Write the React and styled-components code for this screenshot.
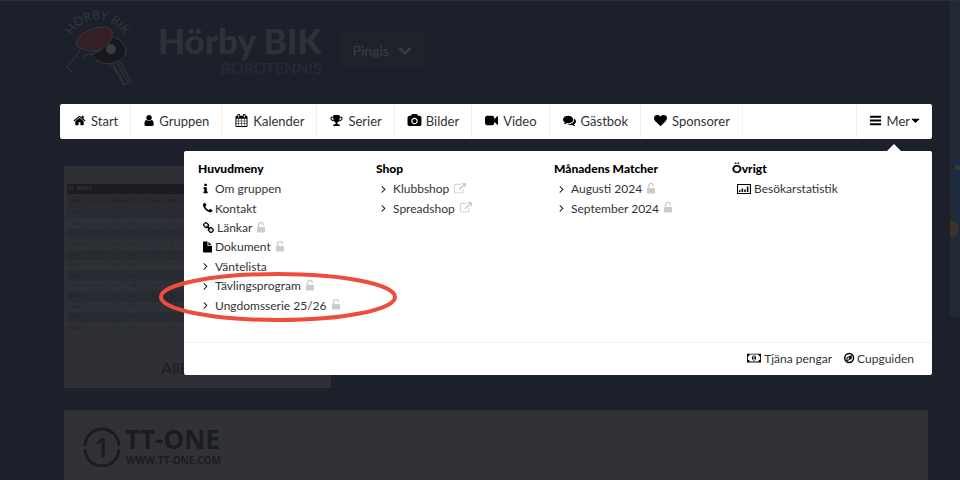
import React from "react";
import styled, { createGlobalStyle } from "styled-components";

const GlobalStyle = createGlobalStyle`
  * {
    box-sizing: border-box;
  }

  body {
    margin: 0;
    background: #1c202b;
    color: #333333;
    font-family: Lato, "Liberation Sans", sans-serif;
    font-size: 13px;
  }

  ul, h1, h2, p {
    margin: 0;
    padding: 0;
    list-style: none;
  }

  a, button {
    color: inherit;
    font: inherit;
    text-decoration: none;
  }
`;

const ICONS = {
  home: "M1472 992v480q0 26-19 45t-45 19h-384v-384h-256v384h-384q-26 0-45-19t-19-45v-480q0-1 .5-3t.5-3l575-474 575 474q1 2 1 6zm223-69l-62 74q-8 9-21 11h-3q-13 0-21-7l-692-577-692 577q-12 8-24 7-13-2-21-11l-62-74q-8-10-7-23.5t11-21.5l719-599q32-26 76-26t76 26l244 204v-195q0-14 9-23t23-9h192q14 0 23 9t9 23v408l219 182q10 8 11 21.5t-7 23.5z",
  user: "M1536 1399q0 109-62.5 187t-150.5 78h-854q-88 0-150.5-78t-62.5-187q0-85 8.5-160.5t31.5-152 58.5-131 94-89 134.5-34.5q131 128 313 128t313-128q76 0 134.5 34.5t94 89 58.5 131 31.5 152 8.5 160.5zm-256-887q0 159-112.5 271.5t-271.5 112.5-271.5-112.5-112.5-271.5 112.5-271.5 271.5-112.5 271.5 112.5 112.5 271.5z",
  calendar: "M192 1664h288v-288h-288v288zm352 0h320v-288h-320v288zm-352-352h288v-320h-288v320zm352 0h320v-320h-320v320zm-352-384h288v-288h-288v288zm736 736h320v-288h-320v288zm-384-736h320v-288h-320v288zm768 736h288v-288h-288v288zm-384-352h320v-320h-320v320zm-352-864v-288q0-13-9.5-22.5t-22.5-9.5h-64q-13 0-22.5 9.5t-9.5 22.5v288q0 13 9.5 22.5t22.5 9.5h64q13 0 22.5-9.5t9.5-22.5zm736 864h288v-320h-288v320zm-384-384h320v-288h-320v288zm384 0h288v-288h-288v288zm32-480v-288q0-13-9.5-22.5t-22.5-9.5h-64q-13 0-22.5 9.5t-9.5 22.5v288q0 13 9.5 22.5t22.5 9.5h64q13 0 22.5-9.5t9.5-22.5zm384-64v1280q0 52-38 90t-90 38h-1408q-52 0-90-38t-38-90v-1280q0-52 38-90t90-38h128v-96q0-66 47-113t113-47h64q66 0 113 47t47 113v96h384v-96q0-66 47-113t113-47h64q66 0 113 47t47 113v96h128q52 0 90 38t38 90z",
  trophy: "M522 883q-74-162-74-371h-256v96q0 78 94.5 162t235.5 113zm1078-275v-96h-256q0 209-74 371 141-29 235.5-113t94.5-162zm128-128v128q0 71-41.5 143t-112 130-173 97.5-215.5 44.5q-42 54-95 95-38 34-52.5 72.5t-14.5 89.5q0 54 30.5 91t97.5 37q75 0 133.5 45.5t58.5 114.5v64q0 14-9 23t-23 9h-832q-14 0-23-9t-9-23v-64q0-69 58.5-114.5t133.5-45.5q67 0 97.5-37t30.5-91q0-51-14.5-89.5t-52.5-72.5q-53-41-95-95-113-5-215.5-44.5t-173-97.5-112-130-41.5-143v-128q0-40 28-68t68-28h288v-96q0-66 47-113t113-47h576q66 0 113 47t47 113v96h288q40 0 68 28t28 68z",
  camera: "M896 672q119 0 203.5 84.5t84.5 203.5-84.5 203.5-203.5 84.5-203.5-84.5-84.5-203.5 84.5-203.5 203.5-84.5zm704-416q106 0 181 75t75 181v896q0 106-75 181t-181 75h-1408q-106 0-181-75t-75-181v-896q0-106 75-181t181-75h224l51-136q19-49 69.5-84.5t103.5-35.5h512q53 0 103.5 35.5t69.5 84.5l51 136h224zm-704 1152q185 0 316.5-131.5t131.5-316.5-131.5-316.5-316.5-131.5-316.5 131.5-131.5 316.5 131.5 316.5 316.5 131.5z",
  video: "M1792 352v1088q0 42-39 59-13 5-25 5-27 0-45-19l-403-403v166q0 119-84.5 203.5t-203.5 84.5h-704q-119 0-203.5-84.5t-84.5-203.5v-704q0-119 84.5-203.5t203.5-84.5h704q119 0 203.5 84.5t84.5 203.5v165l403-402q18-19 45-19 12 0 25 5 39 17 39 59z",
  comments: "M1408 768q0 139-94 257t-256.5 186.5-353.5 68.5q-86 0-176-16-124 88-278 128-36 9-86 16h-3q-11 0-20.5-8t-11.5-21q-1-3-1-6.5t.5-6.5 2-6l2.5-5 3.5-5.5 4-5 4.5-5 4-4.5q5-6 23-25t26-29.5 22.5-29 25-38.5 20.5-44q-124-72-195-177t-71-224q0-139 94-257t256.5-186.5 353.5-68.5 353.5 68.5 256.5 186.5 94 257zm384 256q0 120-71 224.5t-195 176.5q10 24 20.5 44t25 38.5 22.5 29 26 29.5 23 25q1 1 4 4.5t4.5 5 4 5 3.5 5.5l2.5 5 2 6 .5 6.5-1 6.5q-3 14-13 22t-22 7q-50-7-86-16-154-40-278-128-90 16-176 16-271 0-472-132 58 4 88 4 161 0 309-45t264-129q125-92 192-212t67-254q0-77-23-152 129 71 204 178t75 230z",
  heart: "M896 1664q-26 0-44-18l-624-602q-10-8-27.5-26t-55.5-65.5-68-97.5-53.5-121-23.5-138q0-220 127-344t351-124q62 0 126.5 21.5t120 58 95.5 68.5 76 68q36-36 76-68t95.5-68.5 120-58 126.5-21.5q224 0 351 124t127 344q0 221-229 450l-623 600q-18 18-44 18z",
  bars: "M128 256h1536v256h-1536zM128 768h1536v256h-1536zM128 1280h1536v256h-1536z",
  caret: "M1408 704q0 26-19 45l-448 448q-19 19-45 19t-45-19l-448-448q-19-19-19-45t19-45 45-19h896q26 0 45 19t19 45z",
  info: "M1216 1344v128q0 26-19 45t-45 19h-512q-26 0-45-19t-19-45v-128q0-26 19-45t45-19h64v-384h-64q-26 0-45-19t-19-45v-128q0-26 19-45t45-19h384q26 0 45 19t19 45v576h64q26 0 45 19t19 45zm-128-1152v192q0 26-19 45t-45 19h-256q-26 0-45-19t-19-45v-192q0-26 19-45t45-19h256q26 0 45 19t19 45z",
  phone: "M1600 1240q0 27-10 70.5t-21 68.5q-21 50-122 106-94 51-186 51-27 0-53-3.5t-57.5-12.5-47-14.5-55.5-20.5-49-18q-98-35-175-83-127-79-264-216t-216-264q-48-77-83-175-3-9-18-49t-20.5-55.5-14.5-47-12.5-57.5-3.5-53q0-92 51-186 56-101 106-122 25-11 68.5-21t70.5-10q14 0 21 3 18 6 53 76 11 19 30 54t35 63.5 31 53.5q3 4 17.5 25t21.5 35.5 7 28.5q0 20-28.5 50t-62 55-62 53-28.5 46q0 9 5 22.5t8.5 20.5 14 24 11.5 19q76 137 174 235t235 174q2 1 19 11.5t24 14 20.5 8.5 22.5 5q18 0 46-28.5t53-62 55-62 50-28.5q14 0 28.5 7t35.5 21.5 25 17.5q25 15 53.5 31t63.5 35 54 30q70 35 76 53 3 7 3 21z",
  link: "M1520 1216q0-40-28-68l-208-208q-28-28-68-28-42 0-72 32 3 3 19 18.5t21.5 21.5 15 19 13 25.5 3.5 27.5q0 40-28 68t-68 28q-15 0-27.5-3.5t-25.5-13-19-15-21.5-21.5-18.5-19q-33 31-33 73 0 40 28 68l206 207q27 27 68 27 40 0 68-26l147-146q28-28 28-67zm-703-705q0-40-28-68l-206-207q-28-28-68-28-39 0-68 27l-147 146q-28 28-28 67 0 40 28 68l208 208q27 27 68 27 42 0 72-31-3-3-19-18.5t-21.5-21.5-15-19-13-25.5-3.5-27.5q0-40 28-68t68-28q15 0 27.5 3.5t25.5 13 19 15 21.5 21.5 18.5 19q33-31 33-73zm895 705q0 120-85 203l-147 146q-83 83-203 83-121 0-204-85l-206-207q-83-83-83-203 0-123 88-209l-88-88q-86 88-208 88-120 0-204-84l-208-208q-84-84-84-204t85-203l147-146q83-83 203-83 121 0 204 85l206 207q83 83 83 203 0 123-88 209l88 88q86-88 208-88 120 0 204 84l208 208q84 84 84 204z",
  file: "M1024 640v-472q22 14 36 28l408 408q14 14 28 36h-472zM896 128v544q0 40 28 68t68 28h544v800q0 40-28 68t-68 28h-1088q-40 0-68-28t-28-68v-1344q0-40 28-68t68-28z",
  angle: "M1171 960q0 13-10 23l-466 466q-10 10-23 10t-23-10l-50-50q-10-10-10-23t10-23l393-393-393-393q-10-10-10-23t10-23l50-50q10-10 23-10t23 10l466 466q10 10 10 23z",
  unlock: "M1376 768q40 0 68 28t28 68v576q0 40-28 68t-68 28h-960q-40 0-68-28t-28-68v-576q0-40 28-68t68-28h32v-320q0-185 131.5-316.5t316.5-131.5 316.5 131.5 131.5 316.5q0 26-19 45t-45 19h-64q-26 0-45-19t-19-45q0-106-75-181t-181-75-181 75-75 181v320h736z",
  external: "M1408 928v320q0 119-84.5 203.5t-203.5 84.5h-832q-119 0-203.5-84.5t-84.5-203.5v-832q0-119 84.5-203.5t203.5-84.5h704q14 0 23 9t9 23v64q0 14-9 23t-23 9h-704q-66 0-113 47t-47 113v832q0 66 47 113t113 47h832q66 0 113-47t47-113v-320q0-14 9-23t23-9h64q14 0 23 9t9 23zm384-864v512q0 26-19 45t-45 19-45-19l-176-176-652 652q-10 10-23 10t-23-10l-114-114q-10-10-10-23t10-23l652-652-176-176q-19-19-19-45t19-45 45-19h512q26 0 45 19t19 45z",
  chart: "M-128 160h2048v1472h-2048zM32 320v1152h1728v-1152zM160 1088h224v256h-224zM544 832h224v512h-224zM928 960h224v384h-224zM1312 512h224v832h-224z",
  money: "M-128 256h2048v1280h-2048zM256 384q0 106-75 181t-181 75v512q106 0 181 75t75 181h1280q0-106 75-181t181-75v-512q-106 0-181-75t-75-181zM896 512q160 0 230 120t70 264-70 264-230 120-230-120-70-264 70-264 230-120zM832 640l-128 112 64 76 64-40v236h-96v112h320v-112h-96v-384z",
  compass: "M896 128a768 768 0 1 1 0 1536a768 768 0 1 1 0-1536zM896 352a544 544 0 1 0 0 1088a544 544 0 1 0 0-1088zM1280 448v576l-768 384v-576zM896 768l-240 150v270l240-150z",
  chevron: "M1683 808l-742 741q-19 19-45 19t-45-19l-742-741q-19-19-19-45.5t19-45.5l166-165q19-19 45-19t45 19l531 531 531-531q19-19 45-19t45 19l166 165q19 19 19 45.5t-19 45.5z"
};

// left edge and advance of the glyphs that do not fill the 1792 grid
const GLYPHS = {
  user: [200, 1408],
  info: [512, 640],
  phone: [192, 1408],
  link: [80, 1664],
  file: [256, 1280],
  angle: [512, 640],
  unlock: [320, 1152],
  chart: [-128, 2048],
  money: [-128, 2048],
  compass: [128, 1536]
};

const Svg = styled.svg`
  display: block;
  flex: none;
  overflow: visible;
  width: ${props => props.$width}px;
  height: ${props => props.$height}px;
  fill: ${props => props.$color};
`;

const Icon = ({ name, size = 13, color = "#000000" }) => {
  const [left, advance] = GLYPHS[name] || [0, 1792];
  return (
    <Svg
      viewBox={`${left} 0 ${advance} 1792`}
      preserveAspectRatio="xMinYMid slice"
      $width={Math.round((size * advance) / 1792)}
      $height={size}
      $color={color}
      aria-hidden="true"
    >
      <path fillRule="evenodd" d={ICONS[name]} />
    </Svg>
  );
};

const Page = styled.div`
  position: relative;
  height: 100vh;
  overflow: hidden;
  padding: 0 28px 0 60px;
  border-top: 1px solid #2b2f39;
`;

const Header = styled.header`
  display: flex;
  height: 103px;
  padding-left: 4px;
`;

const Logo = styled.svg`
  width: 72px;
  height: 90px;
  margin-top: 4px;
  overflow: visible;
`;

const TitleBlock = styled.div`
  margin-left: 22px;
  padding-top: 19px;
  text-align: right;
`;

const ClubName = styled.h1`
  color: #303137;
  font-size: 35px;
  line-height: 40px;
  font-weight: 900;
`;

const ClubSport = styled.p`
  color: #2a2c34;
  font-size: 16px;
  line-height: 16px;
`;

const TeamButton = styled.button`
  display: flex;
  align-items: center;
  gap: 9px;
  height: 38px;
  margin: 30px 0 0 17px;
  padding: 0 14px;
  border: 0;
  border-radius: 3px;
  background: #1f222b;
  color: #3a3c43;
  font-size: 14px;
`;

const Nav = styled.nav`
  position: relative;
  display: flex;
  height: 35px;
  border-radius: 2px;
  background: #ffffff;
`;

const NavLink = styled.a`
  display: flex;
  align-items: center;
  gap: 5px;
  padding: 0 12px 2px 13px;
  margin: 1px 0;
  border-right: 1px solid #f0f0f0;
`;

const MoreButton = styled.button`
  display: flex;
  align-items: center;
  gap: 5px;
  margin: 1px 0 1px auto;
  padding: 0 10px 2px 12px;
  border: 0;
  border-left: 1px solid #f0f0f0;
  background: none;

  svg:last-child {
    margin: 0 0 0 -6px;
  }
`;

const MegaMenu = styled.div`
  position: absolute;
  top: 47px;
  left: 124px;
  right: 0;
  z-index: 2;
  border-radius: 2px;
  background: #ffffff;
  font-size: 12px;

  &::before {
    content: "";
    position: absolute;
    top: -7px;
    right: 31px;
    border: 7px solid transparent;
    border-top: 0;
    border-bottom-color: #ffffff;
  }
`;

const MenuColumns = styled.div`
  display: grid;
  grid-template-columns: repeat(4, 1fr);
  padding: 8px 22px 27px 14px;
  border-bottom: 1px solid #f0f0f0;
`;

const MenuTitle = styled.h2`
  color: #000000;
  font-size: 12px;
  line-height: 20px;
  font-weight: 900;
`;

const MenuList = styled.ul`
  display: grid;
  grid-template-rows: repeat(7, 1fr);
  height: 136px;
  padding-left: 5px;
`;

const MenuItem = styled.li`
  display: flex;
  align-items: center;
  gap: 5px;
`;

const MenuLink = styled.a`
  display: flex;
  align-items: center;
  gap: 3px;
`;

const IconSlot = styled.span`
  min-width: 9px;
`;

const MenuFooter = styled.div`
  display: flex;
  justify-content: flex-end;
  gap: 12px;
  height: 32px;
  padding: 0 18px 2px 0;
`;

const Content = styled.main`
  padding: 27px 4px 0;
`;

const AdCard = styled.section`
  width: 267px;
  height: 222px;
  padding: 18px 3px 0;
  background: #2f3035;
  color: #1b1c21;
  text-align: center;
`;

const AdTable = styled.table`
  width: 100%;
  height: 139px;
  table-layout: fixed;
  border-collapse: collapse;
  color: #202127;
  font-family: "Liberation Serif", serif;
  font-size: 4px;
  line-height: 10px;

  caption {
    background: #1b1c21;
    color: #3b3c41;
    font-family: "Liberation Mono", monospace;
    font-size: 5px;
    line-height: 10px;
    text-align: left;
    padding-left: 1px;
  }

  th, td {
    padding: 0;
    height: 10px;
  }

  th {
    height: 14px;
    background: #2a2b30;
  }

  tbody tr:nth-child(odd) {
    background: #282b32;
  }
`;

const AdName = styled.p`
  margin-top: 25px;
  font-size: 16px;
  line-height: 20px;
`;

const SponsorCard = styled.section`
  display: flex;
  gap: 4px;
  height: 90px;
  margin-top: 22px;
  padding: 15px 19px;
  background: #313236;
  color: #1b1c20;
  font-family: "Open Sans", sans-serif;
`;

const SponsorLogo = styled.svg`
  width: 38px;
  height: 40px;
  margin-top: 2px;
  fill: none;
  stroke: #1b1c20;
  stroke-width: 3;

  text {
    fill: #1b1c20;
    stroke: none;
    font-size: 27px;
    font-weight: 600;
  }
`;

const SponsorName = styled.p`
  font-size: 26px;
  line-height: 28px;
  font-weight: 700;
`;

const SponsorUrl = styled.p`
  padding-left: 1px;
  font-size: 10px;
  line-height: 14px;
  font-weight: 700;
`;

const SideBanner = styled.svg`
  position: absolute;
  top: 0;
  right: 0;
  width: 10px;
  height: 316px;
`;

const Marker = styled.svg`
  position: absolute;
  top: 118px;
  left: -27px;
  width: 244px;
  height: 56px;
  fill: none;
  stroke: #ee4d3d;
  stroke-width: 4;
  pointer-events: none;
`;

const navItems = [
  { icon: "home", label: "Start" },
  { icon: "user", label: "Gruppen" },
  { icon: "calendar", label: "Kalender" },
  { icon: "trophy", label: "Serier" },
  { icon: "camera", label: "Bilder" },
  { icon: "video", label: "Video" },
  { icon: "comments", label: "Gästbok" },
  { icon: "heart", label: "Sponsorer" }
];

const menus = [
  {
    title: "Huvudmeny",
    items: [
      { icon: "info", label: "Om gruppen" },
      { icon: "phone", label: "Kontakt" },
      { icon: "link", label: "Länkar", extra: "unlock" },
      { icon: "file", label: "Dokument", extra: "unlock" },
      { icon: "angle", label: "Väntelista" },
      { icon: "angle", label: "Tävlingsprogram", extra: "unlock" },
      { icon: "angle", label: "Ungdomsserie 25/26", extra: "unlock" }
    ]
  },
  {
    title: "Shop",
    items: [
      { icon: "angle", label: "Klubbshop", extra: "external" },
      { icon: "angle", label: "Spreadshop", extra: "external" }
    ]
  },
  {
    title: "Månadens Matcher",
    items: [
      { icon: "angle", label: "Augusti 2024", extra: "unlock" },
      { icon: "angle", label: "September 2024", extra: "unlock" }
    ]
  },
  {
    title: "Övrigt",
    items: [{ icon: "chart", label: "Besökarstatistik" }]
  }
];

const footerItems = [
  { icon: "money", label: "Tjäna pengar" },
  { icon: "compass", label: "Cupguiden" }
];

const adHead = ["MODEL", "RATIO", "BEARINGS", "WEIGHT", "POWER", "RETRIEVE"];
const adRows = [
  ["500", "5.6", "6+0", "170", "3", "60"],
  ["1000", "5.0", "6+0", "205", "3", "66"],
  ["C2000S", "5.0", "6+0", "210", "3", "66"],
  ["C2000SHG", "6.0", "6+0", "210", "3", "79"],
  ["2500", "5.0", "6+0", "240", "9", "73"],
  ["2500SHG", "6.2", "6+0", "240", "4", "91"],
  ["2500HG", "6.2", "6+0", "240", "9", "91"],
  ["C3000", "5.0", "6+0", "240", "9", "73"],
  ["C3000HG", "6.2", "6+0", "240", "9", "91"],
  ["4000", "4.7", "6+0", "285", "11", "75"],
  ["4000XG", "6.2", "6+0", "285", "11", "99"],
  ["C5000XG", "6.2", "6+0", "300", "11", "101"]
];

const ClubLogo = () => (
  <Logo viewBox="0 0 72 90" role="img" aria-label="Hörby BIK">
    <defs>
      <path id="arc" d="M6 37A28 28 0 0 1 61 37" />
    </defs>
    <text fill="#33353b" fontSize="12">
      <textPath href="#arc" startOffset="50%" textAnchor="middle">HÖRBY BIK</textPath>
    </text>
    <g stroke="#35373d" strokeWidth="1" fill="none">
      <path fill="#17181c" d="M48 32C55 33 60 38 62 45C62 51 58 55 52 57C44 60 34 59 28 50L37 45Z" />
      <path fill="#351f26" d="M13 36C17 27 29 22 40 22C49 22 50 29 46 36C42 43 35 46 28 46C22 46 18 43 15 43C13 42 12 39 13 36Z" />
      <path d="M16 45Q13 50 3 62L9 68M19 53Q21 48 29 49M46 59Q51 63 59 80L67 77Q62 67 56 57M49 59L61 79M53 58L64 77" />
    </g>
    <circle cx="47" cy="44" r="5" fill="#3c3d42" />
  </Logo>
);

const App = () => (
  <>
    <GlobalStyle />
    <Page>
      <Header>
        <ClubLogo />
        <TitleBlock>
          <ClubName>Hörby BIK</ClubName>
          <ClubSport>BORDTENNIS</ClubSport>
        </TitleBlock>
        <TeamButton>
          Pingis
          <Icon name="chevron" size={14} color="#3a3c43" />
        </TeamButton>
      </Header>

      <Nav>
        {navItems.map(item => (
          <NavLink key={item.label} href="#">
            <Icon name={item.icon} />
            {item.label}
          </NavLink>
        ))}
        <MoreButton aria-expanded="true">
          <Icon name="bars" />
          Mer
          <Icon name="caret" />
        </MoreButton>

        <MegaMenu>
          <MenuColumns>
            {menus.map(menu => (
              <div key={menu.title}>
                <MenuTitle>{menu.title}</MenuTitle>
                <MenuList>
                  {menu.items.map(item => (
                    <MenuItem key={item.label}>
                      <MenuLink href="#">
                        <IconSlot>
                          <Icon name={item.icon} size={12} />
                        </IconSlot>
                        {item.label}
                      </MenuLink>
                      {item.extra && <Icon name={item.extra} size={12} color="#cccccc" />}
                    </MenuItem>
                  ))}
                </MenuList>
              </div>
            ))}
          </MenuColumns>
          <MenuFooter>
            {footerItems.map(item => (
              <MenuLink key={item.label} href="#">
                <Icon name={item.icon} size={12} />
                {item.label}
              </MenuLink>
            ))}
          </MenuFooter>
          <Marker viewBox="0 0 244 56" aria-hidden="true">
            <ellipse cx="121" cy="28" rx="117" ry="23" />
          </Marker>
        </MegaMenu>
      </Nav>

      <Content>
        <AdCard>
          <AdTable>
            <caption>21 NASCI</caption>
            <colgroup>
              {adHead.map(name => (
                <col key={name} width="19" />
              ))}
              <col />
            </colgroup>
            <thead>
              <tr>
                {adHead.map(name => (
                  <th key={name}>{name}</th>
                ))}
                <th />
              </tr>
            </thead>
            <tbody>
              {adRows.map(row => (
                <tr key={row[0]}>
                  {row.map((cell, i) => (
                    <td key={i}>{cell}</td>
                  ))}
                  <td />
                </tr>
              ))}
            </tbody>
          </AdTable>
          <AdName>AliExpress</AdName>
        </AdCard>

        <SponsorCard>
          <SponsorLogo viewBox="0 0 38 40" aria-hidden="true">
            <path d="M2 19A17 17 0 0 1 36 19M2 22A17 17 0 0 0 36 22" />
            <text x="19" y="30" textAnchor="middle">1</text>
          </SponsorLogo>
          <div>
            <SponsorName>TT-ONE</SponsorName>
            <SponsorUrl>WWW.TT-ONE.COM</SponsorUrl>
          </div>
        </SponsorCard>
      </Content>

      <SideBanner viewBox="0 0 10 316" aria-hidden="true">
        <path fill="#222b35" d="M0 0H10V316H0z" />
        <path fill="#1b2a40" d="M2 160H10V236L5 205z" />
        <circle cx="1" cy="228" r="8" fill="#3b3230" />
        <path fill="#36392f" d="M5 164h5v5h-5z" />
      </SideBanner>
    </Page>
  </>
);

export default App;
